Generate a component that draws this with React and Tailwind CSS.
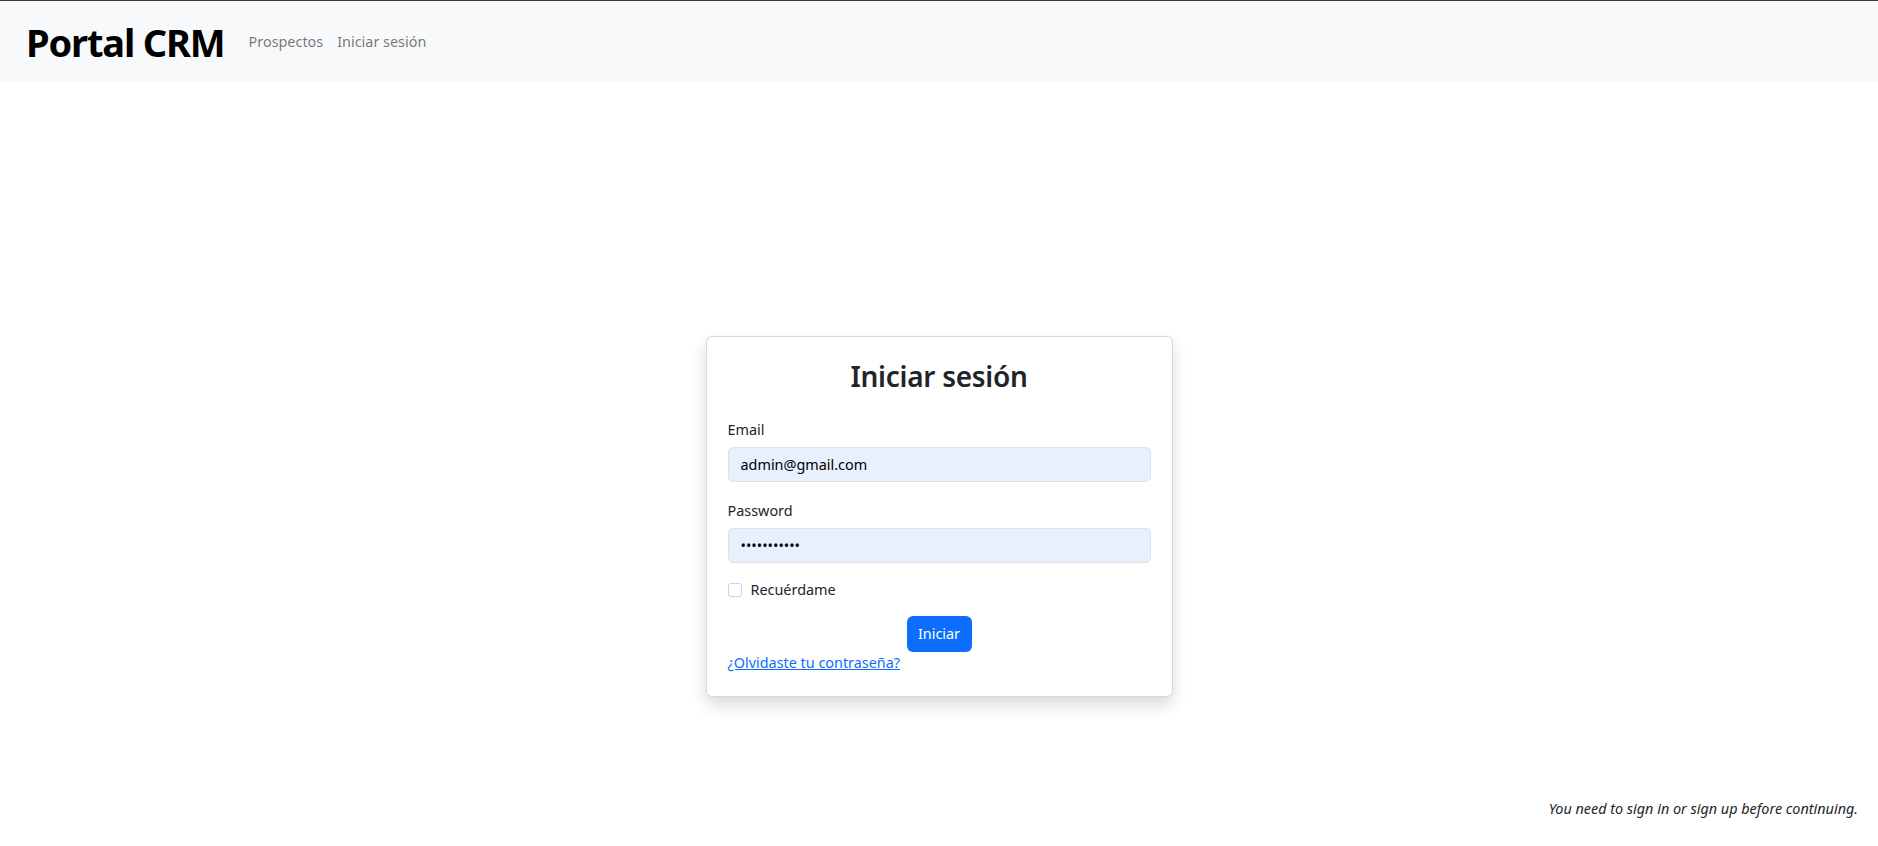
import React, { useState } from 'react';

const font = { fontFamily: '"Segoe UI", "Noto Sans", "Liberation Sans", sans-serif' };

const Navbar = () => (
  <nav className="h-[82px] bg-[#f8f9fa] border-t border-[#4a2c33] flex items-center px-[26px]">
    <h1 className="text-[38px] leading-none font-bold text-black tracking-[-0.03em]">Portal CRM</h1>
    <div className="flex items-center ml-[17px] text-[14.4px] text-black/55">
      <a href="#" className="px-[7px]">Prospectos</a>
      <a href="#" className="px-[7px]">Iniciar sesión</a>
    </div>
  </nav>
);

const LoginCard = () => {
  const [remember, setRemember] = useState(false);

  return (
    <div className="w-[467px] mx-auto mt-[254px] bg-white border border-black/15 rounded-[6px] shadow-[0_8px_16px_rgba(0,0,0,0.15)] px-[21px] pt-[22px] pb-[22px] text-[#212529]">
      <h2 className="text-center text-[28px] leading-[35px] font-semibold tracking-[-0.01em] mb-[25px]">Iniciar sesión</h2>

      {/* Email */}
      <label className="block text-[14.4px] leading-[22px] mb-[6px]">Email</label>
      <input
        type="email"
        defaultValue="admin@gmail.com"
        className="w-full h-[35px] px-[12px] bg-[#e8f0fe] border border-[#dee2e6] rounded-[5px] text-[14.4px] text-black focus:outline-none"
      />

      {/* Password */}
      <label className="block text-[14.4px] leading-[22px] mt-[18px] mb-[6px]">Password</label>
      <input
        type="password"
        defaultValue="admin123456"
        className="w-full h-[35px] px-[12px] bg-[#e8f0fe] border border-[#dee2e6] rounded-[5px] text-[14.4px] text-black focus:outline-none"
      />

      <div className="flex items-center gap-[9px] mt-[16px] h-[22px]">
        <input
          type="checkbox"
          checked={remember}
          onChange={(e) => setRemember(e.target.checked)}
          className="w-[14px] h-[14px] appearance-none border border-[#ced4da] rounded-[3px] bg-white"
        />
        <span className="text-[14.4px] leading-[22px]">Recuérdame</span>
      </div>

      <div className="flex justify-center mt-[15px]">
        <button className="h-[36px] w-[65px] bg-[#0d6efd] text-white text-[14.4px] rounded-[6px]">Iniciar</button>
      </div>

      <a href="#" className="block text-[14.4px] leading-[22px] text-[#0d6efd] underline">¿Olvidaste tu contraseña?</a>
    </div>
  );
};

export default function App() {
  return (
    <div style={font} className="h-screen flex flex-col bg-white">
      <Navbar />
      <main className="flex-1">
        <LoginCard />
      </main>
      <p className="text-right italic text-[14.4px] leading-[22px] text-[#212529] pr-[20px] pb-[26px]">
        You need to sign in or sign up before continuing.
      </p>
    </div>
  );
}
